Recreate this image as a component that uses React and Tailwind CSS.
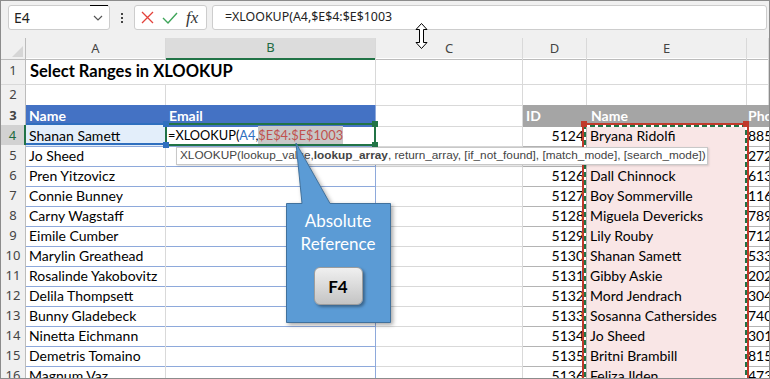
import React from "react";

const cellFont = "[font-family:Lato,'Liberation_Sans',sans-serif]";
const uiFont = "[font-family:'Noto_Sans','Open_Sans',sans-serif]";
const tipFont = "[font-family:'Liberation_Sans',Arial,sans-serif]";
const cols = "grid grid-cols-[25px_140px_210px_147px_64px_160px_22px]";

// row 5's ID and name sit under the formula tooltip, so they stay blank
const people = [
  ["Shanan Samett", "5124", "Bryana Ridolfi", "885"],
  ["Jo Sheed", "", "", "272"],
  ["Pren Yitzovicz", "5126", "Dall Chinnock", "613"],
  ["Connie Bunney", "5127", "Boy Sommerville", "116"],
  ["Carny Wagstaff", "5128", "Miguela Devericks", "789"],
  ["Eimile Cumber", "5129", "Lily Rouby", "712"],
  ["Marylin Greathead", "5130", "Shanan Samett", "533"],
  ["Rosalinde Yakobovitz", "5131", "Gibby Askie", "202"],
  ["Delila Thompsett", "5132", "Mord Jendrach", "304"],
  ["Bunny Gladebeck", "5133", "Sosanna Cathersides", "740"],
  ["Ninetta Eichmann", "5134", "Jo Sheed", "301"],
  ["Demetris Tomaino", "5135", "Britni Brambill", "815"],
  ["Magnum Vaz", "5136", "Feliza Ilden", "473"],
];

function RowHead({ n, active }) {
  return (
    <div
      className={`flex items-center justify-center border-b border-[#d9d9d9] text-[13px] ${uiFont} ${
        active
          ? "bg-[#d2d2d2] text-[#1e6b41] border-r-2 border-r-[#217346]"
          : "bg-[#f0f0f0] text-[#444] border-r border-r-[#bcbcbc]"
      }`}
    >
      {n}
    </div>
  );
}

function FormulaBar() {
  return (
    <div className={`flex h-[37px] items-start gap-[5px] bg-[#f0f0f0] pl-[7px] pt-[4px] ${uiFont}`}>
      <div className="relative flex h-[25px] w-[102px] items-center justify-between rounded-[3px] border border-[#cdcdcd] bg-white pl-[5px] pr-[6px] text-[14px] text-[#222]">
        <span>E4</span>
        <svg width="10" height="6" viewBox="0 0 10 6">
          <path d="M1 1 L5 5 L9 1" fill="none" stroke="#555" strokeWidth="1.2" />
        </svg>
        <div className="absolute right-[1px] top-[-1px] h-[1px] w-[18px] bg-black" />
      </div>
      <div className="flex h-[25px] w-[14px] flex-col items-center justify-center gap-[2px]">
        <div className="h-[2px] w-[2px] bg-[#444]" />
        <div className="h-[2px] w-[2px] bg-[#444]" />
        <div className="h-[2px] w-[2px] bg-[#444]" />
      </div>
      <div className="flex h-[25px] w-[73px] items-center gap-[8px] rounded-[3px] border border-[#cdcdcd] bg-white pl-[6px]">
        <svg width="13" height="13" viewBox="0 0 13 13">
          <path d="M1 1 L12 12 M12 1 L1 12" stroke="#e3413a" strokeWidth="1.3" />
        </svg>
        <svg width="16" height="12" viewBox="0 0 16 12">
          <path d="M1 6 L6 11 L15 1" fill="none" stroke="#3fa55a" strokeWidth="1.4" />
        </svg>
        <span className="[font-family:'Liberation_Serif',serif] text-[17px] italic text-[#333]">fx</span>
      </div>
      <div className="flex h-[25px] w-[555px] items-center rounded-[3px] border border-[#cdcdcd] bg-white pl-[12px] text-[12.4px] text-[#222]">
        =XLOOKUP(A4,$E$4:$E$1003
      </div>
    </div>
  );
}

function ColumnHeader() {
  const base = "flex items-center justify-center border-r border-b";
  return (
    <div className={`${cols} h-[20px] bg-[#f0f0f0] text-[13px] text-[#444] ${uiFont}`}>
      <div className="relative border-r border-b border-[#bcbcbc]">
        <svg className="absolute bottom-[2px] right-[2px]" width="11" height="11" viewBox="0 0 11 11">
          <path d="M11 0 L11 11 L0 11 Z" fill="#d6d6d6" />
        </svg>
      </div>
      <div className={`${base} border-r-[#d9d9d9] border-b-[#bcbcbc]`}>A</div>
      <div className="flex items-center justify-center border-b-2 border-r border-b-[#217346] border-r-[#d9d9d9] bg-[#dcdcdc] text-[#1e6b41]">B</div>
      <div className={`${base} border-r-[#d9d9d9] border-b-[#bcbcbc]`}>C</div>
      <div className={`${base} border-r-[#d9d9d9] border-b-[#bcbcbc]`}>D</div>
      <div className={`${base} border-r-[#d9d9d9] border-b-[#bcbcbc]`}>E</div>
      <div className={`${base} border-r-[#d9d9d9] border-b-[#bcbcbc]`} />
    </div>
  );
}

function Sheet() {
  const grid = "border-r border-b border-[#d9d9d9]";
  const blueRow = "border-b border-b-[#8ea9db]";
  const grayRow = "border-b border-b-[#b4b4b4]";
  return (
    <div className={`${cellFont} text-[14px] text-black`}>
      {/* row 1 */}
      <div className={`${cols} h-[27px]`}>
        <RowHead n={1} />
        <div className={`col-span-2 flex items-center pl-[4px] text-[16.5px] font-bold ${grid}`}>
          Select Ranges in XLOOKUP
        </div>
        <div className={grid} />
        <div className={grid} />
        <div className={grid} />
        <div className={grid} />
      </div>
      {/* row 2 */}
      <div className={`${cols} h-[20px]`}>
        <RowHead n={2} />
        <div className={grid} />
        <div className={grid} />
        <div className={grid} />
        <div className={grid} />
        <div className={grid} />
        <div className={grid} />
      </div>
      {/* row 3 */}
      <div className={`${cols} h-[20px] font-bold text-white`}>
        <RowHead n={3} />
        <div className="flex items-center border-b border-r border-[#4472c4] bg-[#4472c4] pl-[3px]">Name</div>
        <div className="flex items-center border-b border-r border-b-[#4472c4] border-r-[#8ea9db] bg-[#4472c4] pl-[3px]">Email</div>
        <div className={grid} />
        <div className="flex items-center border-b border-r border-[#a5a5a5] bg-[#a5a5a5] pl-[3px]">ID</div>
        <div className="flex items-center border-b border-r border-[#a5a5a5] bg-[#a5a5a5] pl-[4px]">Name</div>
        <div className="flex items-center overflow-hidden whitespace-nowrap border-b border-[#a5a5a5] bg-[#a5a5a5] pl-[1px]">Phone</div>
      </div>
      {people.map((p, i) => {
        const n = i + 4;
        return (
          <div key={n} className={`${cols} h-[20px]`}>
            <RowHead n={n} active={n === 4} />
            <div
              className={`flex items-center whitespace-nowrap border-r border-r-[#d9d9d9] pl-[3px] ${blueRow} ${
                n === 4 ? "bg-[#e3eefa]" : ""
              }`}
            >
              {p[0]}
            </div>
            <div className={`flex items-center whitespace-nowrap border-r border-r-[#8ea9db] pl-[2px] ${blueRow}`}>
              {n === 4 && (
                <span className="text-[12.8px]">
                  =XLOOKUP(<span className="text-[#2f6fbf]">A4</span>,<span className="bg-[#c8c8c8] py-[1px] text-[#c0504d]">$E$4:$E$1003</span>
                </span>
              )}
            </div>
            <div className={grid} />
            <div className={`flex items-center justify-end pr-[2px] border-r border-r-[#b4b4b4] ${grayRow}`}>{p[1]}</div>
            <div className={`flex items-center whitespace-nowrap bg-[#f9e6e6] pl-[3px] border-r border-r-[#b4b4b4] ${grayRow}`}>{p[2]}</div>
            <div className={`flex items-center overflow-hidden pl-[1px] ${grayRow}`}>{p[3]}</div>
          </div>
        );
      })}
    </div>
  );
}

function Handle({ className }) {
  return <div className={`absolute h-[6px] w-[6px] ${className}`} />;
}

export default function App() {
  return (
    <div className="relative h-[379px] w-[770px] overflow-hidden border border-[#8c8c8c] bg-white">
      <FormulaBar />
      <ColumnHeader />
      <Sheet />

      {/* A4 reference box */}
      <div className="absolute left-[25px] top-[122px] h-[22px] w-[141px] border-y-2 border-r-2 border-[#2f6fbf]" />
      {/* B4 edit box */}
      <div className="absolute left-[164px] top-[122px] h-[23px] w-[211px] border-2 border-[#217346]" />
      <Handle className="left-[162px] top-[120px] bg-[#2f6fbf]" />
      <Handle className="left-[162px] top-[141px] bg-[#2f6fbf]" />
      <Handle className="left-[371px] top-[120px] bg-[#217346]" />
      <Handle className="left-[371px] top-[141px] bg-[#217346]" />

      {/* E range reference */}
      <div className="absolute left-[581px] top-[122px] h-[280px] w-[167px] border-2 border-[#c0392b]">
        <svg className="absolute inset-0" width="163" height="276">
          <path d="M1 276 L1 1 L162 1 L162 276" fill="none" stroke="#fff" strokeWidth="2" />
          <path d="M1 276 L1 1 L162 1 L162 276" fill="none" stroke="#217346" strokeWidth="2" strokeDasharray="5 3" />
        </svg>
      </div>
      <Handle className="left-[580px] top-[120px] bg-[#c0392b]" />
      <Handle className="left-[742px] top-[120px] bg-[#c0392b]" />

      {/* function tooltip */}
      <div
        className={`absolute left-[175px] top-[146px] flex h-[18px] w-[532px] items-center whitespace-nowrap border border-[#c8c8c8] bg-white pl-[3px] text-[11.8px] text-[#444] shadow-[1px_1px_2px_rgba(0,0,0,0.15)] ${tipFont}`}
      >
        XLOOKUP(lookup_value,{" "}<b className="font-bold">lookup_array</b>, return_array, [if_not_found], [match_mode], [search_mode])
      </div>

      {/* callout */}
      <svg
        className="absolute left-[279px] top-[137px] drop-shadow-[2px_2px_2px_rgba(0,0,0,0.35)]"
        width="120"
        height="195"
        viewBox="0 0 120 195"
      >
        <path d="M6.5 65.5 L22 65.5 L16 5 L50 65.5 L110.5 65.5 L110.5 184.5 L6.5 184.5 Z" fill="#5b9bd5" stroke="#41719c" />
      </svg>
      <div className={`absolute left-[285px] top-[202px] flex h-[119px] w-[104px] flex-col items-center pt-[6px] text-[17px] leading-[23px] text-white ${cellFont}`}>
        <span>Absolute</span>
        <span>Reference</span>
        <div className="mt-[12px] flex h-[38px] w-[49px] items-center justify-center rounded-[6px] border border-[#9d9d9d] bg-gradient-to-b from-[#f0f0f0] to-[#c4c4c4] text-[17px] font-bold text-black shadow-[2px_2px_3px_rgba(0,0,0,0.35)]">
          F4
        </div>
      </div>

      {/* mouse cursor */}
      <svg className="absolute left-[414px] top-[22px]" width="13" height="26" viewBox="0 0 13 26">
        <path
          d="M6.5 0.5 L12 6.5 L8.5 6.5 L8.5 19.5 L12 19.5 L6.5 25.5 L1 19.5 L4.5 19.5 L4.5 6.5 L1 6.5 Z"
          fill="#fff"
          stroke="#000"
          strokeWidth="1"
        />
      </svg>
    </div>
  );
}
